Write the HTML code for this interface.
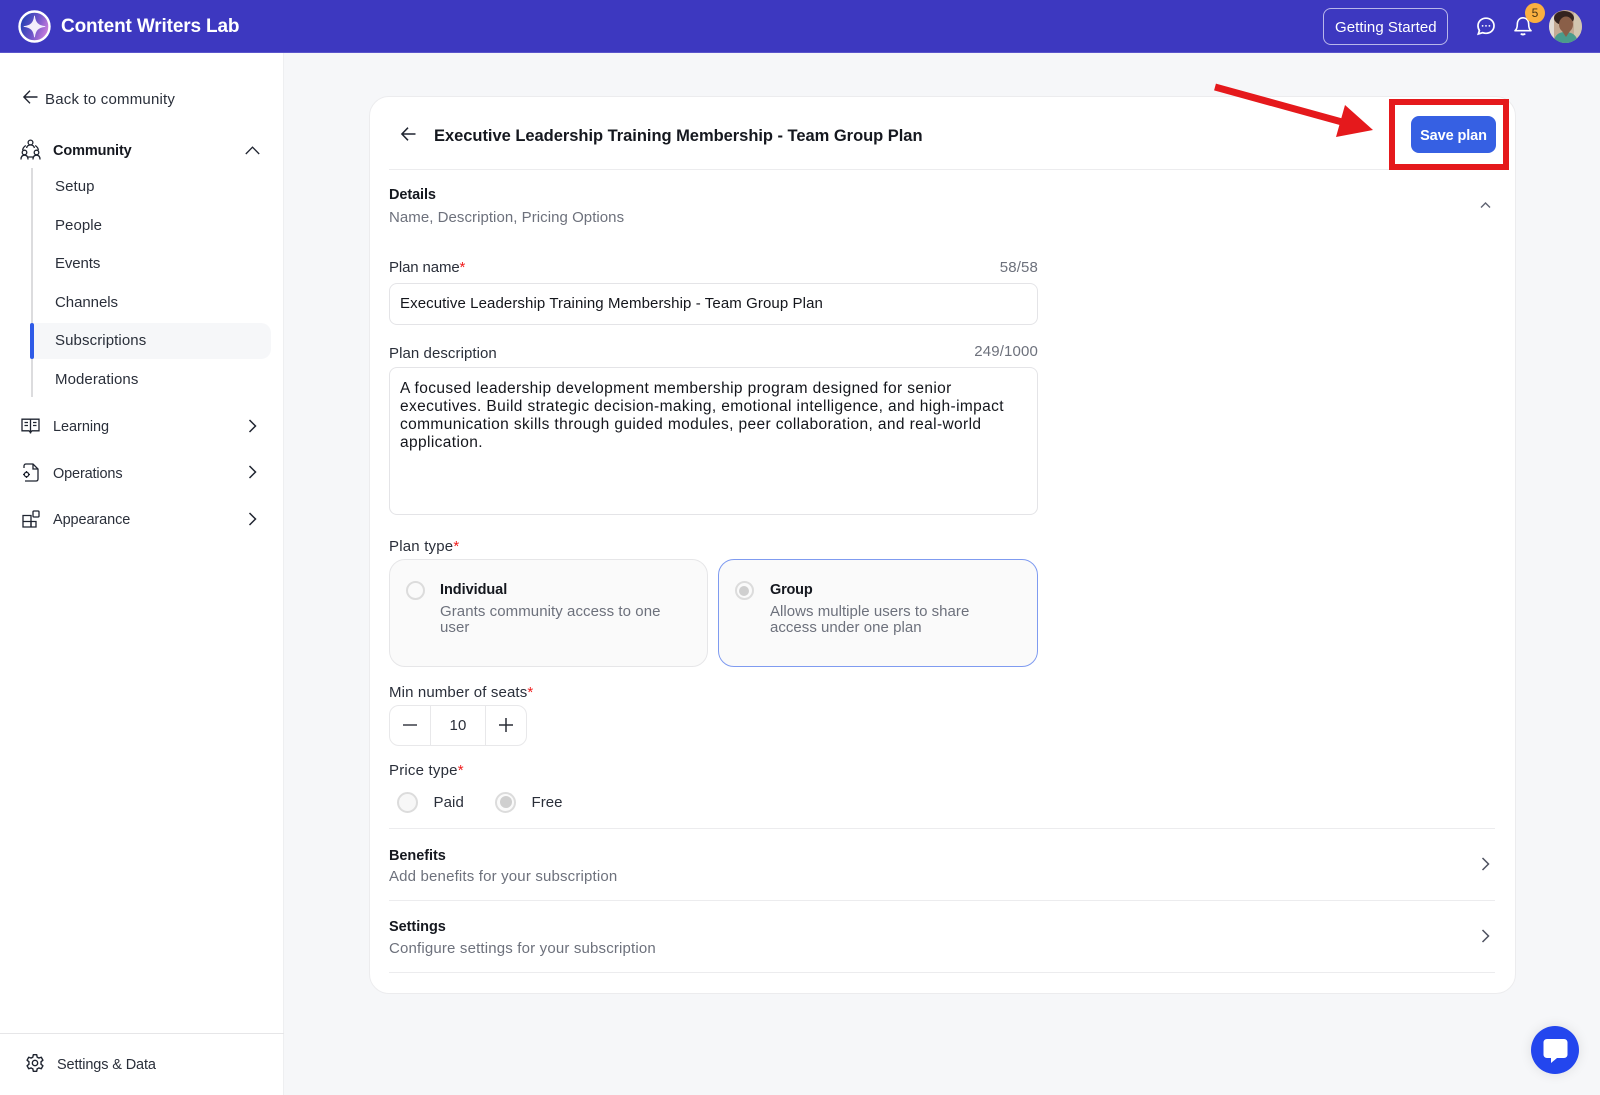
<!DOCTYPE html>
<html lang="en">
<head>
<meta charset="utf-8">
<title>Content Writers Lab</title>
<style>
html,body{margin:0;padding:0;width:1600px;height:1095px;overflow:hidden;background:#f6f7f9;font-family:"Liberation Sans",sans-serif;color:#1f2430}
*{box-sizing:border-box}
.t{position:absolute;white-space:nowrap;line-height:20px;font-size:15px;letter-spacing:.15px;color:#2a2f3a}
.b{font-weight:700;color:#15181f}
.g{color:#6d717c}
.r{color:#f01c1c}
.abs{position:absolute}
svg{position:absolute;overflow:visible}
.ln{position:absolute;height:1px;background:#ececee}
</style>
</head>
<body>
<!-- top bar -->
<div class="abs" style="left:0;top:0;width:1600px;height:53px;background:#3d38c0;border-bottom:1px solid #5a55cc"></div>
<svg style="left:18px;top:10px" width="33" height="33" viewBox="0 0 33 33">
<defs><linearGradient id="lg" x1="0" y1=".3" x2="1" y2=".7"><stop offset="0" stop-color="#1c3fb0"/><stop offset=".5" stop-color="#6a52c8"/><stop offset="1" stop-color="#d884e0"/></linearGradient></defs>
<circle cx="16.500" cy="16.500" r="15" fill="url(#lg)" stroke="#fff" stroke-width="2.400"/>
<path d="M16.500 6C17.300 12.800 20.200 15.700 27 16.500C20.200 17.300 17.300 20.200 16.500 27C15.700 20.200 12.800 17.300 6 16.500C12.800 15.700 15.700 12.800 16.500 6Z" fill="#f3eefc" stroke="#f3eefc" stroke-width=".8" stroke-linejoin="round"/>
</svg>
<div class="t" style="left:61px;top:17px;font-size:19px;font-weight:700;color:#fff;letter-spacing:-.15px">Content Writers Lab</div>
<div class="abs" style="left:1323px;top:8px;width:125px;height:37px;border:1px solid #b9b7ea;border-radius:8px"></div>
<div class="t" style="left:1335px;top:17.500px;font-size:15px;color:#fff;letter-spacing:.05px">Getting Started</div>
<svg style="left:1476px;top:16px" width="20" height="20" viewBox="0 0 20 20" fill="none" stroke="#fff" stroke-width="1.700">
<path d="M10 2.200C14.600 2.200 18 5.500 18 9.800C18 14.100 14.600 17.300 10 17.300C8.800 17.300 7.700 17.100 6.700 16.700L2.300 18L3.400 14.500C2.500 13.200 2 11.600 2 9.800C2 5.500 5.400 2.200 10 2.200Z"/>
<circle cx="6.600" cy="9.900" r=".9" fill="#fff" stroke="none"/><circle cx="10" cy="9.900" r=".9" fill="#fff" stroke="none"/><circle cx="13.400" cy="9.900" r=".9" fill="#fff" stroke="none"/>
</svg>
<svg style="left:1514px;top:16px" width="18" height="20" viewBox="0 0 18 20" fill="none" stroke="#fff" stroke-width="1.600">
<path d="M1 14.700C2.800 13.200 3.300 11.500 3.300 8.500C3.300 4.500 5.500 1.800 9 1.800C12.500 1.800 14.700 4.500 14.700 8.500C14.700 11.500 15.200 13.200 17 14.700Z" stroke-linejoin="round"/>
<path d="M7 17.500C7.800 18.800 10.200 18.800 11 17.500" stroke-width="2"/>
</svg>
<div class="abs" style="left:1525px;top:3px;width:20px;height:20px;border-radius:50%;background:#fbb040;color:#4a3413;font-size:12px;line-height:20px;text-align:center">5</div>
<svg style="left:1549px;top:10px" width="33" height="33" viewBox="0 0 33 33">
<defs><clipPath id="av"><circle cx="16.500" cy="16.500" r="16.500"/></clipPath></defs>
<g clip-path="url(#av)">
<rect width="33" height="33" fill="#c4ab94"/>
<rect x="25" width="8" height="33" fill="#d2c6b0"/>
<rect width="5" height="33" fill="#e2ddd6"/>
<ellipse cx="15" cy="8" rx="10" ry="7" fill="#33231f"/>
<ellipse cx="17" cy="14.500" rx="7" ry="8" fill="#8a5f48"/>
<path d="M5 33C5 25 10 22 16 22C23 22 28 25 29 33Z" fill="#4a9c8c"/>
<path d="M13 21L17 27L21 21Z" fill="#8a5f48"/>
</g>
</svg>

<!-- sidebar -->
<div class="abs" style="left:0;top:53px;width:284px;height:1042px;background:#fff;border-right:1px solid #eeeff1"></div>
<svg style="left:23px;top:90px" width="15" height="14" viewBox="0 0 15 14" fill="none" stroke="#1f2430" stroke-width="1.400"><path d="M14.500 7H1M7 .7L.9 7L7 13.300"/></svg>
<div class="t" style="left:45px;top:89.500px;letter-spacing:.2px">Back to community</div>

<svg style="left:20px;top:139px" width="21" height="22" viewBox="0 0 21 22" fill="none" stroke="#1f2430" stroke-width="1.300">
<circle cx="10.500" cy="3.500" r="2.400"/><path d="M6.600 9C7 6.800 8.500 6 10.500 6C12.500 6 14 6.800 14.400 9"/>
<circle cx="4.500" cy="13.500" r="2.300"/><path d="M1 20.500C1 17.500 2.300 16.200 4.500 16.200C6.700 16.200 8 17.500 8 20.500"/>
<circle cx="16.500" cy="13.500" r="2.300"/><path d="M13 20.500C13 17.500 14.300 16.200 16.500 16.200C18.700 16.200 20 17.500 20 20.500"/>
<path d="M5.800 6.500C3.500 8 2.700 9.500 2.700 11.300M15.200 6.500C17.500 8 18.300 9.500 18.300 11.300M8 18H13"/>
</svg>
<div class="t b" style="left:53px;top:141px;font-size:14.500px;letter-spacing:-.13px">Community</div>
<svg style="left:245px;top:146px" width="15" height="9" viewBox="0 0 15 9" fill="none" stroke="#1f2430" stroke-width="1.300"><path d="M.8 8L7.500 1.200L14.200 8"/></svg>

<div class="abs" style="left:31px;top:168px;width:2px;height:229px;background:#dcdcde"></div>
<div class="abs" style="left:31px;top:323px;width:240px;height:36px;background:#f6f7f9;border-radius:0 10px 10px 0"></div>
<div class="abs" style="left:30px;top:323px;width:4px;height:36px;background:#2f5be7;border-radius:2px"></div>
<div class="t" style="left:55px;top:177px;letter-spacing:.08px">Setup</div>
<div class="t" style="left:55px;top:216px;letter-spacing:.05px">People</div>
<div class="t" style="left:55px;top:254px;letter-spacing:-.1px">Events</div>
<div class="t" style="left:55px;top:293px;letter-spacing:-.05px">Channels</div>
<div class="t" style="left:55px;top:331px;letter-spacing:.1px">Subscriptions</div>
<div class="t" style="left:55px;top:370px;letter-spacing:.08px">Moderations</div>

<svg style="left:21px;top:417px" width="19" height="17" viewBox="0 0 19 17" fill="none" stroke="#1f2430" stroke-width="1.300">
<path d="M9.500 2.200H1V13.800H8L9.500 15.500L11 13.800H18V2.200ZM9.500 2.200V16.500M3.500 5.500H7M3.500 8.500H7M12 5.500H15.500M12 8.500H15.500"/>
</svg>
<div class="t" style="left:53px;top:416.500px;font-size:14.500px;letter-spacing:-.05px">Learning</div>
<svg style="left:248px;top:419px" width="9" height="14" viewBox="0 0 9 14" fill="none" stroke="#1f2430" stroke-width="1.500"><path d="M1.500 1L7.500 7L1.500 13"/></svg>

<svg style="left:22px;top:463px" width="17" height="19" viewBox="0 0 17 19" fill="none" stroke="#1f2430" stroke-width="1.300">
<path d="M2 5V3C2 1.800 2.800 1 4 1H11L16 6V16C16 17.200 15.200 18 14 18H3"/><path d="M11 1V6H16"/><circle cx="4.500" cy="11.500" r="2.200"/><path d="M4.500 8V9.300M4.500 13.700V15M1 11.500H2.300M6.700 11.500H8"/>
</svg>
<div class="t" style="left:53px;top:463.500px;font-size:14.500px;letter-spacing:-.15px">Operations</div>
<svg style="left:248px;top:465px" width="9" height="14" viewBox="0 0 9 14" fill="none" stroke="#1f2430" stroke-width="1.500"><path d="M1.500 1L7.500 7L1.500 13"/></svg>

<svg style="left:22px;top:510px" width="18" height="18" viewBox="0 0 18 18" fill="none" stroke="#1f2430" stroke-width="1.300">
<path d="M1 5.500H9V17H1ZM1 11.500H14V17H9"/><path d="M9 11.500V17"/><rect x="11" y="1" width="6" height="6" rx="1"/>
</svg>
<div class="t" style="left:53px;top:510px;font-size:14.500px;letter-spacing:-.1px">Appearance</div>
<svg style="left:248px;top:512px" width="9" height="14" viewBox="0 0 9 14" fill="none" stroke="#1f2430" stroke-width="1.500"><path d="M1.500 1L7.500 7L1.500 13"/></svg>

<div class="abs" style="left:0;top:1033px;width:284px;height:1px;background:#e6e6e8"></div>
<svg style="left:25px;top:1053px" width="20" height="20" viewBox="0 0 24 24" fill="none" stroke="#1f2430" stroke-width="1.700" stroke-linejoin="round">
<circle cx="12" cy="12" r="3.200"/>
<path d="M10 2H14L14.600 5C15.300 5.300 16 5.700 16.600 6.100L19.500 5.100L21.500 8.600L19.200 10.600C19.300 11.300 19.300 12.700 19.200 13.400L21.500 15.400L19.500 18.900L16.600 17.900C16 18.300 15.300 18.700 14.600 19L14 22H10L9.400 19C8.700 18.700 8 18.300 7.400 17.900L4.500 18.900L2.500 15.400L4.800 13.400C4.700 12.700 4.700 11.300 4.800 10.600L2.500 8.600L4.500 5.100L7.400 6.100C8 5.700 8.700 5.300 9.400 5Z"/>
</svg>
<div class="t" style="left:57px;top:1055px;font-size:14.500px;letter-spacing:-.13px">Settings &amp; Data</div>

<!-- card -->
<div class="abs" style="left:369px;top:96px;width:1147px;height:898px;background:#fff;border:1px solid #ececee;border-radius:20px"></div>
<svg style="left:401px;top:127px" width="15" height="14" viewBox="0 0 15 14" fill="none" stroke="#1f2430" stroke-width="1.500"><path d="M14.500 7H1M7 .7L.9 7L7 13.300"/></svg>
<div class="t b" style="left:434px;top:125.500px;font-size:16.500px;letter-spacing:-.03px">Executive Leadership Training Membership - Team Group Plan</div>
<div class="ln" style="left:389px;top:169px;width:1106px"></div>

<div class="t b" style="left:389px;top:185px;font-size:14.500px;letter-spacing:-.1px">Details</div>
<div class="t g" style="left:389px;top:207.500px;letter-spacing:.05px">Name, Description, Pricing Options</div>
<svg style="left:1480px;top:201px" width="11" height="8" viewBox="0 0 11 8" fill="none" stroke="#5e6270" stroke-width="1.400"><path d="M1 6.500L5.500 2L10 6.500"/></svg>

<div class="t" style="left:389px;top:258px;letter-spacing:-.13px">Plan name<span class="r">*</span></div>
<div class="t g" style="right:562px;top:258px">58/58</div>
<div class="abs" style="left:389px;top:283px;width:649px;height:42px;border:1px solid #e4e4e7;border-radius:8px;background:#fff"></div>
<div class="t" style="left:400px;top:294px;color:#14161c;letter-spacing:.095px">Executive Leadership Training Membership - Team Group Plan</div>

<div class="t" style="left:389px;top:343.500px;letter-spacing:.07px">Plan description</div>
<div class="t g" style="right:562px;top:342px">249/1000</div>
<div class="abs" style="left:389px;top:367px;width:649px;height:148px;border:1px solid #e4e4e7;border-radius:8px;background:#fff"></div>
<div class="t" style="left:400px;top:379.500px;color:#14161c;line-height:18.300px;font-size:15.500px;letter-spacing:.38px">A focused leadership development membership program designed for senior<br>executives. Build strategic decision-making, emotional intelligence, and high-impact<br>communication skills through guided modules, peer collaboration, and real-world<br>application.</div>

<div class="t" style="left:389px;top:537px;letter-spacing:.2px">Plan type<span class="r">*</span></div>
<div class="abs" style="left:389px;top:559px;width:319px;height:108px;background:#fafafa;border:1px solid #e6e6e8;border-radius:16px"></div>
<div class="abs" style="left:718px;top:559px;width:320px;height:108px;background:#fafafa;border:1px solid #7f9bf0;border-radius:16px"></div>
<div class="abs" style="left:405.500px;top:581px;width:19px;height:19px;border-radius:50%;border:2px solid #dcdcdc;background:#fafafa"></div>
<div class="abs" style="left:734.500px;top:581px;width:19px;height:19px;border-radius:50%;border:2px solid #dcdcdc;background:#fafafa"></div>
<div class="abs" style="left:739px;top:585.500px;width:10px;height:10px;border-radius:50%;background:#cfcfcf"></div>
<div class="t b" style="left:440px;top:580px;font-size:14.500px;letter-spacing:-.05px">Individual</div>
<div class="t g" style="left:440px;top:603.500px;line-height:16.500px;letter-spacing:.07px">Grants community access to one<br>user</div>
<div class="t b" style="left:770px;top:580px;font-size:14.500px;letter-spacing:-.2px">Group</div>
<div class="t g" style="left:770px;top:603.500px;line-height:16.500px;letter-spacing:.03px">Allows multiple users to share<br>access under one plan</div>

<div class="t" style="left:389px;top:683px;letter-spacing:.13px">Min number of seats<span class="r">*</span></div>
<div class="abs" style="left:389px;top:705px;width:138px;height:41px;border:1px solid #e8e8ea;border-radius:10px;background:#fff"></div>
<div class="abs" style="left:430px;top:705px;width:1px;height:41px;background:#e8e8ea"></div>
<div class="abs" style="left:485px;top:705px;width:1px;height:41px;background:#e8e8ea"></div>
<svg style="left:403px;top:718px" width="14" height="14" viewBox="0 0 14 14" stroke="#3a3d47" stroke-width="1.500"><path d="M0 7H14"/></svg>
<svg style="left:499px;top:718px" width="14" height="14" viewBox="0 0 14 14" stroke="#2a2d36" stroke-width="1.500"><path d="M0 7H14M7 0V14"/></svg>
<div class="t" style="left:431px;top:715.500px;width:54px;text-align:center">10</div>

<div class="t" style="left:389px;top:761px;letter-spacing:.2px">Price type<span class="r">*</span></div>
<div class="abs" style="left:397px;top:791.500px;width:21px;height:21px;border-radius:50%;border:2px solid #dcdcdc;background:#f7f7f7"></div>
<div class="abs" style="left:495px;top:791.500px;width:21px;height:21px;border-radius:50%;border:2px solid #dcdcdc;background:#fafafa"></div>
<div class="abs" style="left:499.500px;top:796px;width:12px;height:12px;border-radius:50%;background:#cfcfcf"></div>
<div class="t" style="left:433.500px;top:792.500px;letter-spacing:.1px">Paid</div>
<div class="t" style="left:531.500px;top:792.500px;letter-spacing:.05px">Free</div>

<div class="ln" style="left:389px;top:828px;width:1106px"></div>
<div class="t b" style="left:389px;top:845.500px;font-size:14.500px;letter-spacing:-.05px">Benefits</div>
<div class="t g" style="left:389px;top:866.500px;letter-spacing:.17px">Add benefits for your subscription</div>
<svg style="left:1481px;top:857px" width="9" height="14" viewBox="0 0 9 14" fill="none" stroke="#4e5260" stroke-width="1.500"><path d="M1.500 1L7.500 7L1.500 13"/></svg>
<div class="ln" style="left:389px;top:900px;width:1106px"></div>
<div class="t b" style="left:389px;top:916.500px;font-size:14.500px;letter-spacing:-.05px">Settings</div>
<div class="t g" style="left:389px;top:938.500px;letter-spacing:.17px">Configure settings for your subscription</div>
<svg style="left:1481px;top:929px" width="9" height="14" viewBox="0 0 9 14" fill="none" stroke="#4e5260" stroke-width="1.500"><path d="M1.500 1L7.500 7L1.500 13"/></svg>
<div class="ln" style="left:389px;top:972px;width:1106px"></div>

<!-- annotation -->
<div class="abs" style="left:1389px;top:99px;width:120px;height:71px;border:6.500px solid #e5191c"></div>
<div class="abs" style="left:1411px;top:116px;width:85px;height:37px;background:#3660e3;border-radius:8px"></div>
<div class="t" style="left:1411px;top:125.500px;width:85px;text-align:center;color:#fff;font-weight:700;font-size:14.500px;letter-spacing:-.1px">Save plan</div>
<svg style="left:0;top:0" width="1600" height="1095">
<path d="M1215 87L1342 122" stroke="#e5191c" stroke-width="7" fill="none"/>
<path d="M1345 105L1373 130L1336 137Z" fill="#e5191c"/>
</svg>

<!-- chat -->
<div class="abs" style="left:1531px;top:1026px;width:48px;height:48px;border-radius:50%;background:#2346ee;box-shadow:0 0 12px rgba(0,0,0,.1)"></div>
<svg style="left:1543px;top:1038.500px" width="25" height="25" viewBox="0 0 25 25"><path d="M4 0H21C23 0 24.500 1.500 24.500 3.500V15.500C24.500 17.500 23 19 21 19H14L8 24V19H4C2 19 .5 17.500 .5 15.500V3.500C.5 1.500 2 0 4 0Z" fill="#fff"/></svg>
</body>
</html>
